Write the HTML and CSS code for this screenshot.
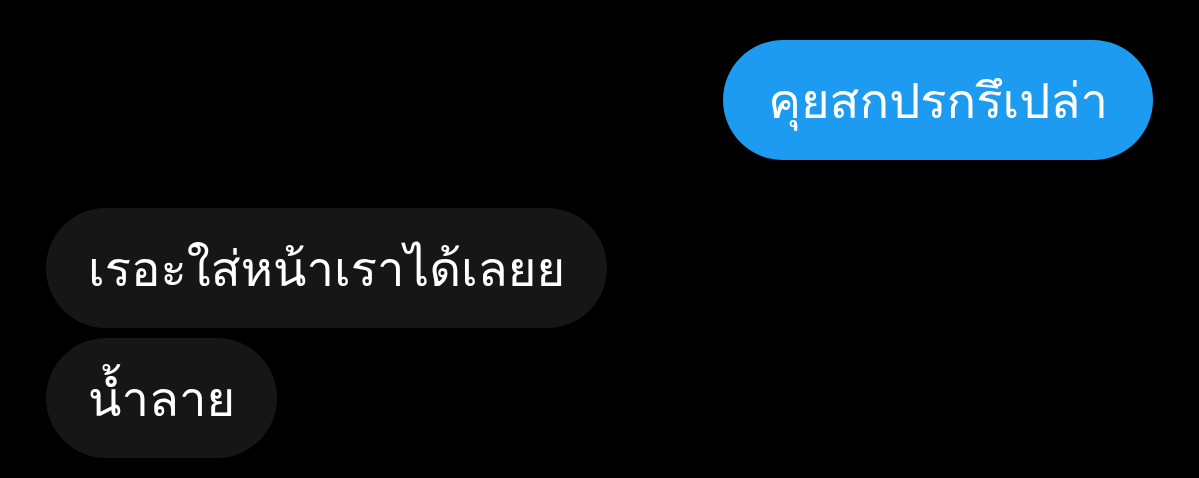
FILE: index.html
```html
<!DOCTYPE html>
<html lang="th">
<head>
<meta charset="utf-8">
<link rel="stylesheet" href="styles.css">
</head>
<body>
<div class="chat">
  <div class="row row-out"><div class="bubble bubble-out">คุยสกปรกรึเปล่า</div></div>
  <div class="group-in">
    <div class="row"><div class="bubble bubble-in">เรอะใส่หน้าเราได้เลยย</div></div>
    <div class="row"><div class="bubble bubble-in">น้ำลาย</div></div>
  </div>
</div>
</body>
</html>
```
FILE: styles.css
```css
html, body {
  margin: 0;
  padding: 0;
  background: #000;
  width: 1199px;
  height: 478px;
  overflow: hidden;
}
.chat {
  display: flex;
  flex-direction: column;
  padding: 40px 46px 0 46px;
  font-family: "Loma", "Noto Sans Thai", sans-serif;
  color: #fff;
}
.row {
  display: flex;
}
.row-out {
  justify-content: flex-end;
}
.group-in {
  display: flex;
  flex-direction: column;
  gap: 10px;
  margin-top: 48px;
}
.bubble {
  box-sizing: border-box;
  height: 120px;
  border-radius: 60px;
  padding: 2px 42px 0;
  display: flex;
  align-items: center;
  font-size: 49px;
  white-space: nowrap;
}
.bubble-out {
  background: #1d9bf0;
  padding: 2px 45px 0;
}
.bubble-in {
  background: #161616;
}
```
